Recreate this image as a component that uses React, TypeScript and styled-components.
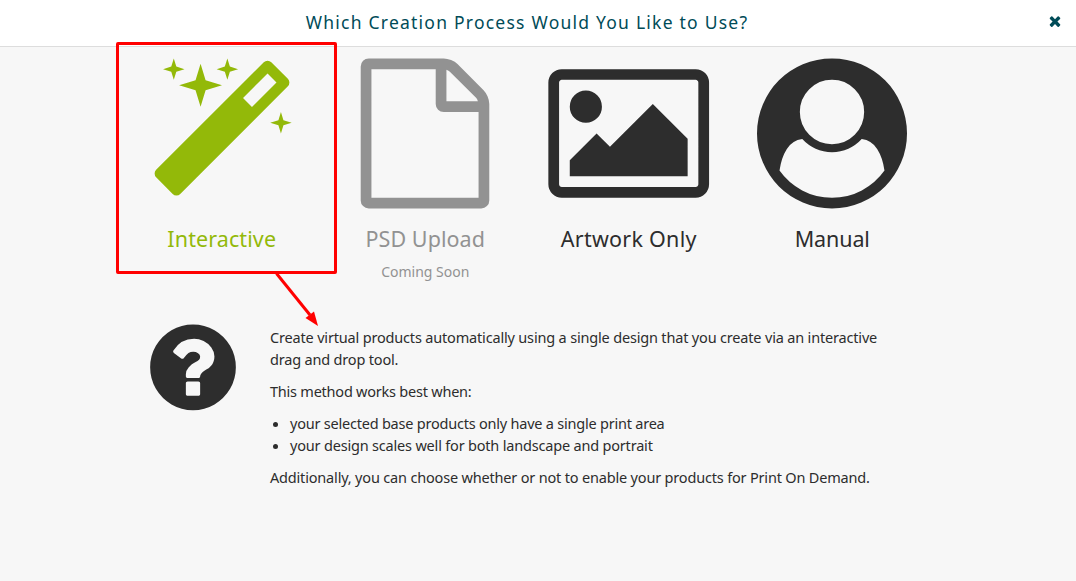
import * as React from 'react';
import styled, { createGlobalStyle } from 'styled-components';

const colors = {
  teal: '#004b57',
  dark: '#2d2d2d',
  green: '#93b909',
  grey: '#929292',
  background: '#f7f7f7',
  border: '#dddddd',
  red: '#ff0000',
};

const icons = {
  magic:
    'M1254 581l293-293-107-107-293 293zm447-293q0 27-18 45l-1286 1286q-18 18-45 18t-45-18l-198-198q-18-18-18-45t18-45l1286-1286q18-18 45-18t45 18l198 198q18 18 18 45zm-1351-190l98 30-98 30-30 98-30-98-98-30 98-30 30-98zm350 162l196 60-196 60-60 196-60-196-196-60 196-60 60-196zm930 478l98 30-98 30-30 98-30-98-98-30 98-30 30-98zm-640-640l98 30-98 30-30 98-30-98-98-30 98-30 30-98z',
  file:
    'M1596 380q28 28 48 76t20 88v1152q0 40-28 68t-68 28h-1344q-40 0-68-28t-28-68v-1600q0-40 28-68t68-28h896q40 0 88 20t76 48zm-444-244v376h376q-10-29-22-41l-313-313q-12-12-41-22zm384 1528v-1024h-416q-40 0-68-28t-28-68v-416h-768v1536h1280z',
  picture:
    'M704 576q0 80-56 136t-136 56-136-56-56-136 56-136 136-56 136 56 56 136zm1024 384v448h-1408v-192l320-320 160 160 512-512zm96-704h-1600q-13 0-22.5 9.5t-9.5 22.5v1216q0 13 9.5 22.5t22.5 9.5h1600q13 0 22.5-9.5t9.5-22.5v-1216q0-13-9.5-22.5t-22.5-9.5zm160 32v1216q0 66-47 113t-113 47h-1600q-66 0-113-47t-47-113v-1216q0-66 47-113t113-47h1600q66 0 113 47t47 113z',
  user:
    'M1523 1339q-22-155-87.5-257.5t-184.5-118.5q-67 74-159.5 115.5t-195.5 41.5-195.5-41.5-159.5-115.5q-119 16-184.5 118.5t-87.5 257.5q106 150 271 237.5t356 87.5 356-87.5 271-237.5zm-243-699q0-159-112.5-271.5t-271.5-112.5-271.5 112.5-112.5 271.5 112.5 271.5 271.5 112.5 271.5-112.5 112.5-271.5zm512 256q0 182-71 347.5t-190.5 286-285.5 191.5-349 71q-182 0-348-71t-286-191-191-286-71-348 71-348 191-286 286-191 348-71 348 71 286 191 191 286 71 348z',
  question:
    'M1024 1376v-192q0-14-9-23t-23-9h-192q-14 0-23 9t-9 23v192q0 14 9 23t23 9h192q14 0 23-9t9-23zm256-672q0-88-55.5-163t-138.5-116-170-41q-243 0-371 213-15 24 8 42l132 100q7 6 19 6 16 0 25-12 53-68 86-92 34-24 86-24 48 0 85.5 26t37.5 59q0 38-20 61t-68 45q-63 28-115.5 86.5t-52.5 125.5v36q0 14 9 23t23 9h192q14 0 23-9t9-23q0-19 21.5-49.5t54.5-49.5q32-18 49-28.5t46-35 44.5-48 28-60.5 12.5-81zm384 192q0 209-103 385.5t-279.5 279.5-385.5 103-385.5-103-279.5-279.5-103-385.5 103-385.5 279.5-279.5 385.5-103 385.5 103 279.5 279.5 103 385.5z',
  times:
    'M1490 1322q0 40-28 68l-136 136q-28 28-68 28t-68-28l-294-294-294 294q-28 28-68 28t-68-28l-136-136q-28-28-28-68t28-68l294-294-294-294q-28-28-28-68t28-68l136-136q28-28 68-28t68 28l294 294 294-294q28-28 68-28t68 28l136 136q28 28 28 68t-28 68l-294 294 294 294q28 28 28 68z',
};

const GlobalStyle = createGlobalStyle`
  * {
    box-sizing: border-box;
  }

  body {
    margin: 0;
    background: ${colors.background};
    color: ${colors.dark};
    font-family: 'Noto Sans', sans-serif;
    overflow: hidden;
  }
`;

const Modal = styled.div`
  position: relative;
  display: flex;
  flex-direction: column;
  height: 581px;
`;

const Header = styled.header`
  display: flex;
  align-items: center;
  flex: 0 0 47px;
  padding: 0 13px 0 7px;
  background: white;
  border-bottom: 1px solid ${colors.border};
`;

const Title = styled.h1`
  display: flex;
  justify-content: center;
  flex: 1;
  margin: 0;
  padding-bottom: 3px;
  color: ${colors.teal};
  font-size: 17.5px;
  font-weight: 400;
  line-height: 24px;
`;

const CloseButton = styled.button`
  display: flex;
  padding: 0;
  margin-bottom: 4px;
  border: none;
  background: none;
  color: ${colors.teal};
`;

const Options = styled.div`
  display: grid;
  grid-template-columns: repeat(4, 1fr);
  width: 814px;
  height: 270px;
  margin-left: 120px;
  padding-top: 11px;
`;

const Option = styled.div<{ color: string }>`
  display: flex;
  flex-direction: column;
  align-items: center;
  color: ${({ color }) => color};
`;

const OptionLabel = styled.div`
  margin-top: 16px;
  font-size: 21.5px;
  line-height: 30px;
`;

const OptionNote = styled.div`
  margin-top: 7px;
  font-size: 14px;
  line-height: 22px;
`;

const Details = styled.section`
  display: flex;
  gap: 27px;
  padding-left: 143px;
`;

const Description = styled.div`
  padding-top: 9px;
  font-size: 14.5px;
  line-height: 22px;

  p {
    margin: 0 0 10px;
  }

  ul {
    margin: 0 0 10px;
    padding-left: 20px;
  }
`;

const Line = styled.span<{ $tracking?: number }>`
  display: table;
  letter-spacing: ${({ $tracking = 0 }) => $tracking}px;
  white-space: nowrap;
`;

const Glyph = styled.svg`
  flex: none;
  overflow: visible;
`;

const Highlight = styled.div`
  position: absolute;
  top: 42px;
  left: 116px;
  width: 221px;
  height: 232px;
  border: 3px solid ${colors.red};
  border-radius: 2px;
`;

const Arrow = styled.svg`
  position: absolute;
  top: 270px;
  left: 270px;
`;

interface IconProps {
  path: string;
  size: number;
  wide?: boolean;
  shift?: number;
}

const Icon: React.FunctionComponent<IconProps> = ({ path, size, wide, shift = 0 }) => {
  const units = wide ? 2048 : 1792;

  return (
    <Glyph width={(size * units) / 1792} height={size} viewBox={`0 ${-shift} ${units} 1792`}>
      <path d={path} fill="currentColor" />
    </Glyph>
  );
};

const options = [
  { label: 'Interactive', icon: icons.magic, color: colors.green, tracking: 0.1 },
  { label: 'PSD Upload', icon: icons.file, color: colors.grey, tracking: 0.05, note: 'Coming Soon' },
  { label: 'Artwork Only', icon: icons.picture, color: colors.dark, tracking: 0.25, wide: true },
  { label: 'Manual', icon: icons.user, color: colors.dark, tracking: -0.1 },
];

const App: React.FunctionComponent = () => (
  <>
    <GlobalStyle />
    <Modal>
      <Header>
        <Title>
          <Line $tracking={1.23}>Which Creation Process Would You Like to Use?</Line>
        </Title>
        <CloseButton aria-label="Close">
          <Icon path={icons.times} size={16} />
        </CloseButton>
      </Header>
      <Options>
        {options.map(({ label, icon, color, tracking, note, wide }) => (
          <Option key={label} color={color}>
            <Icon path={icon} size={150} wide={wide} shift={5} />
            <OptionLabel>
              <Line $tracking={tracking}>{label}</Line>
            </OptionLabel>
            {note && (
              <OptionNote>
                <Line>{note}</Line>
              </OptionNote>
            )}
          </Option>
        ))}
      </Options>
      <Details>
        <Icon path={icons.question} size={100} shift={5} />
        <Description>
          <p>
            <Line $tracking={-0.175}>
              Create virtual products automatically using a single design that you create via an interactive
            </Line>
            <Line $tracking={-0.18}>drag and drop tool.</Line>
          </p>
          <p>
            <Line $tracking={-0.23}>This method works best when:</Line>
          </p>
          <ul>
            <li>
              <Line $tracking={-0.22}>your selected base products only have a single print area</Line>
            </li>
            <li>
              <Line $tracking={-0.19}>your design scales well for both landscape and portrait</Line>
            </li>
          </ul>
          <p>
            <Line $tracking={-0.18}>
              Additionally, you can choose whether or not to enable your products for Print On Demand.
            </Line>
          </p>
        </Description>
      </Details>
      <Highlight />
      <Arrow width="52" height="60" viewBox="0 0 52 60">
        <path d="M6.5 3.5L40 45" stroke={colors.red} strokeWidth="3" />
        <path d="M48 56L35.5 48L44 41.5Z" fill={colors.red} />
      </Arrow>
    </Modal>
  </>
);

export default App;
